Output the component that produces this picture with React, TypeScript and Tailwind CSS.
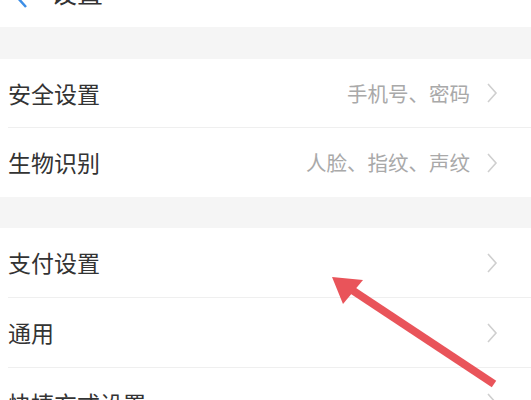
import React from "react";

const font = { fontFamily: '"Noto Sans CJK SC", "Noto Sans", sans-serif' };

function Chevron() {
  return (
    <svg width="12" height="22" viewBox="0 0 12 22" className="shrink-0">
      <path d="M2 2 L10 11 L2 20" fill="none" stroke="#cfcfcf" strokeWidth="1.6" />
    </svg>
  );
}

function Row({ title, value, divider, h }: { title: string; value?: string; divider?: boolean; h: string }) {
  return (
    <div className={`flex items-center bg-white pl-[8px] ${h}`}>
      <div className={`flex h-full flex-1 items-center pr-[33px] ${divider ? "border-b border-[#efefef]" : ""}`}>
        <span className="flex-1 text-[23px] text-[#333333]">{title}</span>
        {value && <span className="mr-[16px] text-[20.5px] text-[#a9a9a9]">{value}</span>}
        <Chevron />
      </div>
    </div>
  );
}

export default function App() {
  return (
    <div className="relative h-[400px] w-[531px] overflow-hidden bg-white" style={font}>
      <div className="flex h-[27px] items-end bg-white">
        <div className="flex h-[60px] shrink-0 translate-y-[33px] items-center">
          <svg width="40" height="60" viewBox="0 0 40 60" className="-translate-y-[33px]">
            <path d="M26 20 L17 30 L26 40" fill="none" stroke="#3d8ee6" strokeWidth="2.5" />
          </svg>
        </div>
      </div>
      <div className="pointer-events-none absolute left-[51px] top-[-21px] text-[26px] leading-[26px] text-[#333]">设置</div>
      <div className="h-[32px] bg-[#f5f5f5]" />
      <Row title="安全设置" value="手机号、密码" divider h="h-[69px]" />
      <Row title="生物识别" value="人脸、指纹、声纹" h="h-[69px]" />
      <div className="h-[31px] bg-[#f5f5f5]" />
      <Row title="支付设置" divider h="h-[70px]" />
      <Row title="通用" divider h="h-[70px]" />
      <Row title="快捷方式设置" h="h-[70px]" />
      <svg className="pointer-events-none absolute left-0 top-0" width="531" height="400" viewBox="0 0 531 400">
        <line x1="494" y1="384" x2="352" y2="290" stroke="#e9545a" strokeWidth="8" strokeLinecap="butt" />
        <polygon points="332,277 363,280 343,304" fill="#e9545a" />
      </svg>
    </div>
  );
}
